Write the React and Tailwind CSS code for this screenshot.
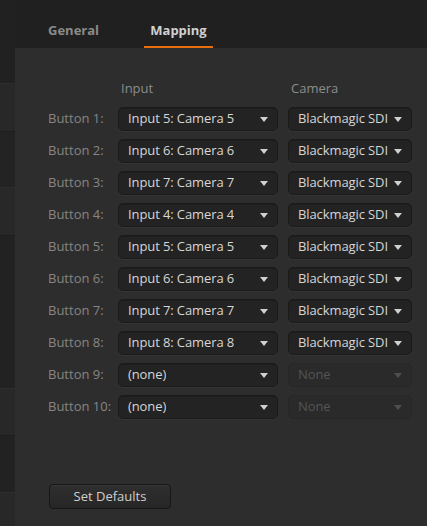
import React from "react";

const rows = [
  { input: "Input 5: Camera 5", camera: "Blackmagic SDI" },
  { input: "Input 6: Camera 6", camera: "Blackmagic SDI" },
  { input: "Input 7: Camera 7", camera: "Blackmagic SDI" },
  { input: "Input 4: Camera 4", camera: "Blackmagic SDI" },
  { input: "Input 5: Camera 5", camera: "Blackmagic SDI" },
  { input: "Input 6: Camera 6", camera: "Blackmagic SDI" },
  { input: "Input 7: Camera 7", camera: "Blackmagic SDI" },
  { input: "Input 8: Camera 8", camera: "Blackmagic SDI" },
  { input: "(none)", camera: null },
  { input: "(none)", camera: null },
];

// bands of the window sitting behind the dialog
const bands = [
  "h-[83px] bg-[#212121]",
  "h-[48px] bg-[#282828] border-t border-[#2e2e2e]",
  "h-[56px] bg-[#232323] border-t border-[#1d1d1d]",
  "h-[48px] bg-[#282828] border-t border-[#2e2e2e]",
  "h-[153px] bg-[#222222] border-t border-[#1d1d1d]",
  "h-[47px] bg-[#282828] border-t border-[#2e2e2e]",
  "h-[57px] bg-[#222222] border-t border-[#1d1d1d]",
  "flex-1 bg-[#282828] border-t border-[#2e2e2e]",
];

function Arrow({ disabled }) {
  return (
    <svg width="8" height="5" viewBox="0 0 8 5" className="shrink-0">
      <path d="M0 0 H8 L4 5 Z" fill={disabled ? "#4e4e4e" : "#d0d0d0"} />
    </svg>
  );
}

function Select({ value, width, disabled }) {
  return (
    <div
      className={
        "h-[24px] rounded-[5px] border flex items-center justify-between pl-[9px] pr-[9px] overflow-hidden " +
        width +
        (disabled
          ? " bg-[#2a2a2a] border-[#272727] text-[#555555]"
          : " bg-[#232323] border-[#1a1a1a] text-[#d6d6d6] shadow-[inset_0_1px_0_#1e1e1e,0_1px_0_#353535]")
      }
    >
      <span className="whitespace-nowrap overflow-hidden mr-[6px] tracking-[-0.1px]">{value}</span>
      <Arrow disabled={disabled} />
    </div>
  );
}

export default function App() {
  return (
    <div
      className="w-[427px] h-[526px] flex bg-[#202020] overflow-hidden text-[13px]"
      style={{ fontFamily: '"Open Sans", "Noto Sans", sans-serif' }}
    >
      <div className="w-[15px] flex flex-col shrink-0">
        {bands.map((b, i) => (
          <div key={i} className={b} />
        ))}
      </div>
      <div className="flex-1 flex flex-col">
        <div className="h-[48px] bg-[#202020] flex items-end pl-[33px] font-bold text-[13px]">
          <div className="text-[#8a8a8a] pb-[8px] w-[96px]">General</div>
          <div className="flex flex-col items-center">
            <div className="text-[#d0d0d0] px-[6px] pb-[6px]">Mapping</div>
            <div className="h-[2px] w-[69px] bg-[#ea6d0c]" />
          </div>
        </div>
        <div className="flex-1 bg-[#2d2d2d] pl-[33px] pt-[31px] flex flex-col">
          <div className="flex text-[#8c8c8c] h-[20px] items-center mb-[8px]">
            <div className="w-[73px]" />
            <div className="w-[170px]">Input</div>
            <div>Camera</div>
          </div>
          <div className="flex flex-col gap-[8px]">
            {rows.map((r, i) => (
              <div key={i} className="flex items-center">
                <div className="w-[70px] text-[#858585] whitespace-nowrap">
                  Button {i + 1}:
                </div>
                <Select value={r.input} width="w-[160px]" />
                <div className="w-[10px]" />
                {r.camera ? (
                  <Select value={r.camera} width="w-[124px]" />
                ) : (
                  <Select value="None" width="w-[124px]" disabled />
                )}
              </div>
            ))}
          </div>
          <div className="mt-[65px] pl-[1px]">
            <button className="w-[122px] h-[25px] rounded-[4px] border border-[#161616] bg-gradient-to-b from-[#2f2f2f] to-[#262626] text-[#cfcfcf] text-[13px] shadow-[inset_0_1px_0_#383838]">
              Set Defaults
            </button>
          </div>
        </div>
      </div>
    </div>
  );
}
